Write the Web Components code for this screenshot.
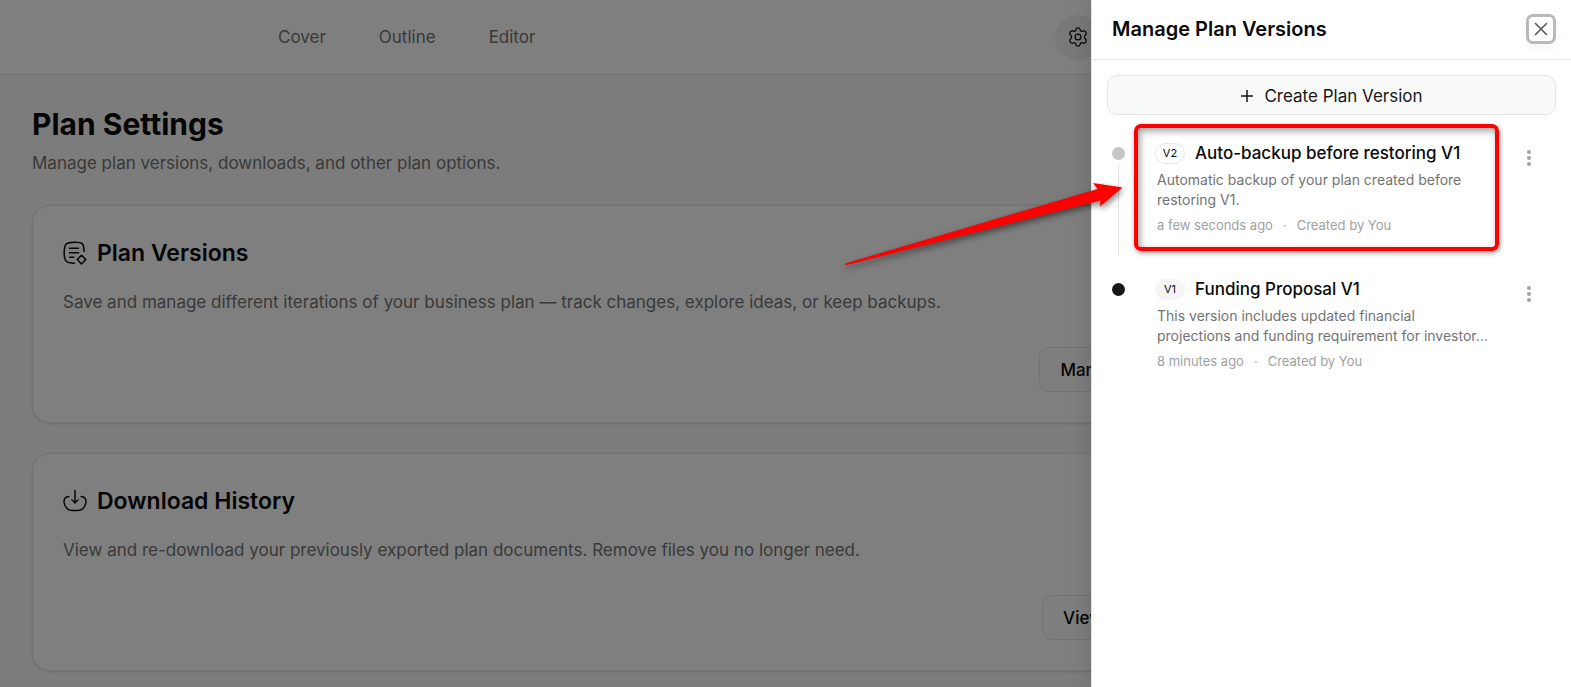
<!DOCTYPE html>
<html lang="en">
<head>
<meta charset="utf-8">
<title>Plan Settings</title>
<style>
  html, body { margin: 0; height: 100%; }
  body { font-family: Inter, "Liberation Sans", sans-serif; font-size: 17px; color: #0a0a0a; background: #f9f9f9; overflow: hidden; }
</style>
</head>
<body>
<plan-app></plan-app>

<template id="t-app">
  <style>
    :host { display: block; position: relative; height: 100%; overflow: hidden; }
    main { box-sizing: border-box; max-width: 1210px; padding: 31px 32px; display: flex; flex-direction: column; gap: 30px; }
    h1 { margin: 0; font-size: 30px; line-height: 36px; font-weight: 700; }
    .intro { margin: 9px 0 0; line-height: 24px; color: #737373; }
    .backdrop { position: absolute; inset: 0; background: rgba(0,0,0,.5); }
    version-drawer { position: absolute; top: 0; right: 0; bottom: 0; }
    callout-arrow { position: absolute; top: 170px; right: 441px; }
  </style>
  <plan-header></plan-header>
  <main>
    <div>
      <h1>Plan Settings</h1>
      <p class="intro">Manage plan versions, downloads, and other plan options.</p>
    </div>
    <settings-card>
      <svg slot="icon" width="24" height="24" viewBox="0 0 24 24" fill="none" stroke="currentColor" stroke-width="1.500" stroke-linecap="round" stroke-linejoin="round"><path d="M11.500 22.200C3.500 22.200 1.200 20.500 1.200 12C1.200 2.500 3 1.200 11.500 1.200S21 2.500 21 10.500"/><path d="M6.500 7.200h9M6.500 11.700h9M6.500 16.300h4.500"/><path d="M18.500 14.300l4.300 4.300-4.300 4.400-4.300-4.400z"/></svg>
      <span slot="title">Plan Versions</span>
      Save and manage different iterations of your business plan — track changes, explore ideas, or keep backups.
      <span slot="action">Manage</span>
    </settings-card>
    <settings-card>
      <svg slot="icon" width="24" height="24" viewBox="0 0 24 24" fill="none" stroke="currentColor" stroke-width="1.500" stroke-linecap="round" stroke-linejoin="round"><path d="M12 1.500v12.500M8.800 11c1 .700 2.200 1.700 3.200 3c1-1.300 2.200-2.300 3.200-3"/><path d="M5.800 7.600C2.500 8 1 9.800 1 12.500C1.300 16.500 3 19 5.500 20.600C7.500 21.900 16.500 21.900 18.500 20.600C21 19 22.700 16.500 23 12.500C23 9.800 21.500 8 18.200 7.600"/></svg>
      <span slot="title">Download History</span>
      View and re-download your previously exported plan documents. Remove files you no longer need.
      <span slot="action">View all</span>
    </settings-card>
  </main>
  <div class="backdrop"></div>
  <version-drawer></version-drawer>
  <callout-arrow></callout-arrow>
</template>

<template id="t-header">
  <style>
    :host { display: block; background: #fff; border-bottom: 1px solid #e5e5e5; }
    .bar { box-sizing: border-box; max-width: 1210px; height: 74px; padding: 0 110px 0 278px; display: flex; align-items: center; justify-content: space-between; }
    nav { display: flex; gap: 53px; }
    a { color: #737373; text-decoration: none; }
    button { width: 45px; height: 45px; padding: 0; border: 0; border-radius: 50%; background: #f3f3f3; color: #0a0a0a; display: grid; place-items: center; }
  </style>
  <header class="bar">
    <nav><a href="#cover">Cover</a><a href="#outline">Outline</a><a href="#editor">Editor</a></nav>
    <button type="button" aria-label="Settings">
      <svg width="20" height="20" viewBox="0 0 24 24" fill="none" stroke="currentColor" stroke-width="1.500" stroke-linejoin="round"><circle cx="12" cy="12" r="3.500"/><path d="M9.600 2.500Q10 1 12 1T14.400 2.500L14.800 4Q15.900 5.600 17.400 5L18.900 4.600Q20.500 4.300 21.500 6.200T21.400 9L20.300 10.200Q19.100 12 20.300 13.800L21.400 15Q22.500 16.200 21.500 17.900T18.900 19.400L17.400 19Q15.900 18.400 14.800 20L14.400 21.500Q14 23 12 23T9.600 21.500L9.200 20Q8.100 18.400 6.600 19L5.100 19.400Q3.500 19.700 2.500 17.800T2.600 15L3.700 13.800Q4.900 12 3.700 10.200L2.600 9Q1.500 7.800 2.500 6.100T5.100 4.600L6.600 5Q8.100 5.600 9.200 4z"/></svg>
    </button>
  </header>
</template>

<template id="t-card">
  <style>
    :host { display: block; background: #fff; border: 1px solid #e5e5e5; border-radius: 18px; padding: 30px; box-shadow: 0 1px 3px rgba(0,0,0,.12); }
    .head { display: flex; align-items: center; gap: 10px; height: 34px; }
    ::slotted(svg) { display: block; }
    h2 { margin: 0; font-size: 23px; line-height: 34px; font-weight: 600; }
    p { margin: 19px 0 32px; line-height: 26px; color: #737373; }
    .foot { display: flex; justify-content: flex-end; }
    button { font: inherit; font-weight: 500; color: inherit; height: 45px; padding: 0 20px; background: #fcfcfc; border: 1px solid #e5e5e5; border-radius: 10px; }
  </style>
  <div class="head"><slot name="icon"></slot><h2><slot name="title"></slot></h2></div>
  <p><slot></slot></p>
  <div class="foot"><button type="button"><slot name="action"></slot></button></div>
</template>

<template id="t-drawer">
  <style>
    :host { display: block; box-sizing: border-box; width: 480px; background: #fff; border-left: 1px solid #e5e5e5; box-shadow: 0 0 24px rgba(0,0,0,.14); }
    header { display: flex; align-items: center; justify-content: space-between; height: 58px; padding: 0 15px 1px 20px; border-bottom: 1px solid #e5e5e5; }
    h2 { margin: 0; font-size: 20px; line-height: 28px; font-weight: 600; }
    .close { box-sizing: border-box; width: 30px; height: 30px; padding: 0; display: grid; place-items: center; background: #fff; color: #525252; border: 3px solid #b9b9b9; border-radius: 7px; box-shadow: 0 4px 12px rgba(0,0,0,.05); }
    .body { padding: 15px; }
    .create { font: inherit; color: #171717; width: 100%; height: 40px; padding: 1px 0 0; display: flex; align-items: center; justify-content: center; gap: 10px; background: #f8faf9; border: 1px solid #e5e5e5; border-radius: 10px; }
    .list { display: flex; flex-direction: column; padding: 26px 0 0 5px; }
  </style>
  <header>
    <h2>Manage Plan Versions</h2>
    <button class="close" type="button" aria-label="Close"><svg width="14" height="14" viewBox="0 0 14 14" fill="none" stroke="currentColor" stroke-width="1.500" stroke-linecap="round"><path d="M1.500 1.500l11 11M12.500 1.500l-11 11"/></svg></button>
  </header>
  <div class="body">
    <button class="create" type="button"><svg width="14" height="14" viewBox="0 0 14 14" fill="none" stroke="currentColor" stroke-width="1.500"><path d="M7 1v12M1 7h12"/></svg>Create Plan Version</button>
    <div class="list">
      <version-item highlighted>
        <span slot="tag">V2</span><span slot="title">Auto-backup before restoring V1</span>
        Automatic backup of your plan created before<br>restoring V1.
        <span slot="time">a few seconds ago</span><span slot="author">Created by You</span>
      </version-item>
      <version-item current>
        <span slot="tag">V1</span><span slot="title">Funding Proposal V1</span>
        This version includes updated financial<br>projections and funding requirement for investor…
        <span slot="time">8 minutes ago</span><span slot="author">Created by You</span>
      </version-item>
    </div>
  </div>
</template>

<template id="t-item">
  <style>
    :host { display: grid; grid-template-columns: 13px 1fr 24px; position: relative; padding-right: 15px; }
    .rail { display: flex; flex-direction: column; align-items: center; padding-top: 6px; }
    .dot { width: 13px; height: 13px; border-radius: 50%; background: #c6c6c6; }
    .line { width: 1px; flex: 1; margin: 5px 0 21px; background: #e0e0e0; }
    :host([current]) .dot { background: #171717; }
    :host([current]) .line { display: none; }
    article { margin-left: 30px; padding-bottom: 42px; min-width: 0; }
    .head { display: flex; align-items: center; gap: 10px; height: 24px; }
    .tag { box-sizing: border-box; width: 30px; height: 21px; border: 1px solid #e5e5e5; border-radius: 11px; font-size: 11px; line-height: 19px; text-align: center; }
    :host([current]) .tag { background: #f5f5f5; border-color: #f5f5f5; }
    h3 { margin: 0; font-size: 17px; line-height: 22px; font-weight: 500; white-space: nowrap; }
    p { margin: 5px 0; padding-left: 2px; font-size: 14px; line-height: 20px; color: #737373; white-space: nowrap; }
    .meta { display: flex; gap: 10px; padding-left: 2px; font-size: 13px; line-height: 20px; color: #a1a1a1; }
    .more { width: 24px; height: 24px; margin-top: 5px; padding: 0; border: 0; background: none; color: #a3a3a3; display: grid; place-items: center; }
    .mark { display: none; }
    :host([highlighted]) .mark { display: block; position: absolute; box-sizing: border-box; left: 22px; right: 57px; top: -17px; height: 127px; border: 4px solid #f00; border-radius: 7px; box-shadow: 1px 2px 5px rgba(0,0,0,.4), inset 2px 3px 7px rgba(0,0,0,.38); pointer-events: none; }
  </style>
  <div class="rail"><div class="dot"></div><div class="line"></div></div>
  <article>
    <div class="head"><span class="tag"><slot name="tag"></slot></span><h3><slot name="title"></slot></h3></div>
    <p><slot></slot></p>
    <div class="meta"><slot name="time"></slot><span>·</span><slot name="author"></slot></div>
  </article>
  <button class="more" type="button" aria-label="Version options"><svg width="4" height="16" viewBox="0 0 4 16" fill="currentColor"><circle cx="2" cy="2" r="2"/><circle cx="2" cy="8" r="2"/><circle cx="2" cy="14" r="2"/></svg></button>
  <div class="mark"></div>
</template>

<template id="t-arrow">
  <style>
    :host { display: block; pointer-events: none; }
    svg { display: block; overflow: visible; filter: drop-shadow(1px 3px 3px rgba(0,0,0,.5)); }
  </style>
  <svg width="300" height="110" viewBox="0 0 300 110" aria-hidden="true"><path fill="#f00" d="M15 93.500L267.500 19L263 13L292.500 17.500L270 36.500L270.500 30.500L16 95.200Q14.500 95 15 93.500z"/></svg>
</template>

<script>
  const define = (name, templateId) => customElements.define(name, class extends HTMLElement {
    constructor() {
      super();
      this.attachShadow({ mode: 'open' }).append(document.getElementById(templateId).content.cloneNode(true));
    }
  });
  define('plan-header', 't-header');
  define('settings-card', 't-card');
  define('version-item', 't-item');
  define('version-drawer', 't-drawer');
  define('callout-arrow', 't-arrow');
  define('plan-app', 't-app');
</script>
</body>
</html>
